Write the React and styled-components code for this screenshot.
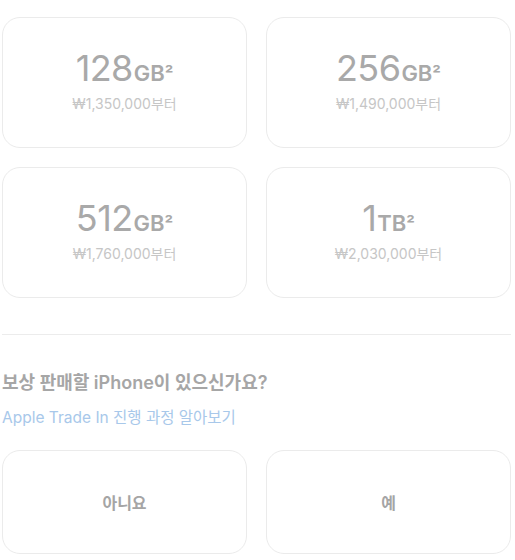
import React from "react";
import styled, { createGlobalStyle } from "styled-components";

const Global = createGlobalStyle`
  html, body { margin: 0; padding: 0; background: #fff; }
  body { font-family: Inter, "Noto Sans CJK KR", sans-serif; }
`;

const Page = styled.div`
  width: 509px;
  padding: 17px 0 0 2px;
  display: flex;
  flex-direction: column;
`;

const Grid = styled.div`
  display: grid;
  grid-template-columns: 245px 245px;
  column-gap: 19px;
  row-gap: 19px;
`;

const Card = styled.div`
  box-sizing: border-box;
  height: ${(p) => p.$h}px;
  padding-bottom: ${(p) => p.$pb || 0}px;
  border: 1px solid #ebebeb;
  border-radius: 18px;
  display: flex;
  flex-direction: column;
  align-items: center;
  justify-content: center;
  background: #fff;
`;

const Size = styled.div`
  color: #a9a9a9;
  font-size: 36px;
  line-height: 38px;
  letter-spacing: -0.6px;
  display: flex;
  align-items: baseline;
`;

const Unit = styled.span`
  font-size: 22px;
  font-weight: 600;
  letter-spacing: 0;
  margin-left: 1px;
`;

const Sup = styled.span`
  font-size: 19px;
  font-weight: 600;
  letter-spacing: 0;
`;

const Price = styled.div`
  margin-top: 2px;
  color: #c6c6c6;
  font-size: 14px;
  line-height: 16px;
`;

const Divider = styled.div`
  height: 1px;
  background: #ececec;
  margin-top: 36px;
`;

const Heading = styled.h2`
  margin: 37px 0 0;
  font-size: 18px;
  line-height: 22px;
  font-weight: 600;
  color: #a6a6a6;
`;

const Link = styled.a`
  margin-top: 14px;
  font-size: 15.5px;
  line-height: 20px;
  color: #a8c8ea;
  text-decoration: none;
`;

const Choices = styled(Grid)`
  margin-top: 22px;
`;

const ChoiceLabel = styled.div`
  font-size: 16px;
  font-weight: 700;
  color: #a5a5a5;
`;

const sizes = [
  { n: "128", u: "GB", p: "₩1,350,000" },
  { n: "256", u: "GB", p: "₩1,490,000" },
  { n: "512", u: "GB", p: "₩1,760,000" },
  { n: "1", u: "TB", p: "₩2,030,000" },
];

export default function App() {
  return (
    <>
      <Global />
      <Page>
        <Grid>
          {sizes.map((s) => (
            <Card key={s.n} $h={131} $pb={4}>
              <Size>
                {s.n}
                <Unit>{s.u}</Unit>
                <Sup>²</Sup>
              </Size>
              <Price>{s.p}부터</Price>
            </Card>
          ))}
        </Grid>
        <Divider />
        <Heading>보상 판매할 iPhone이 있으신가요?</Heading>
        <Link href="#">Apple Trade In 진행 과정 알아보기</Link>
        <Choices>
          <Card $h={104}>
            <ChoiceLabel>아니요</ChoiceLabel>
          </Card>
          <Card $h={104}>
            <ChoiceLabel>예</ChoiceLabel>
          </Card>
        </Choices>
      </Page>
    </>
  );
}
